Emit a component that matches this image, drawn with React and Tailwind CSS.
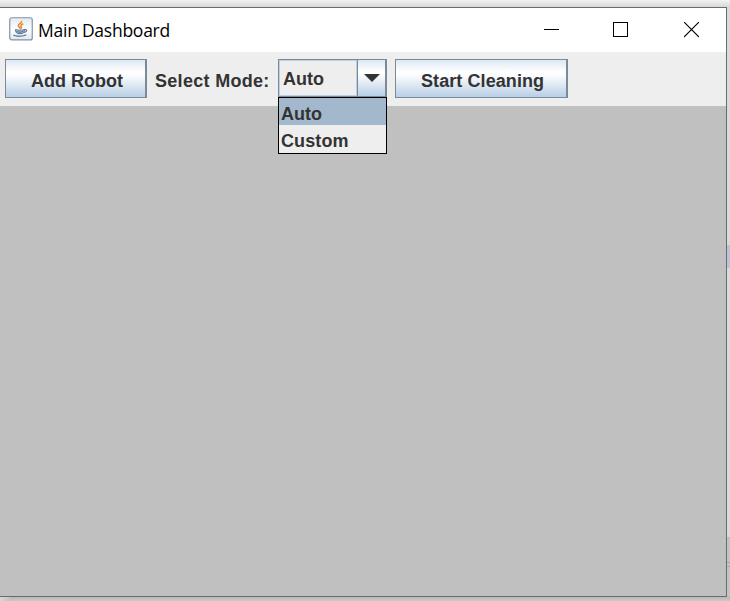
import React from "react";

const label = "whitespace-nowrap text-[18px] leading-[20px] font-bold text-[#333333]";
const metal =
  "bg-[linear-gradient(to_bottom,#dde8f3_0%,#ffffff_32%,#fbfcfe_42%,#b8cfe5_100%)]";

function JavaIcon() {
  return (
    <svg width="24" height="24" viewBox="0 0 24 24" fill="none">
      <defs>
        <linearGradient id="tile" x1="0" y1="0" x2="0" y2="1">
          <stop offset="0" stopColor="#e4e9ee" />
          <stop offset="0.5" stopColor="#ffffff" />
          <stop offset="1" stopColor="#e2e7ed" />
        </linearGradient>
      </defs>
      <rect x="0.75" y="0.75" width="22.5" height="22.2" rx="2" fill="url(#tile)" stroke="#8194a8" strokeWidth="1.2" />
      <path d="M12.600 3.800c1 2-3.800 3-3.300 5 .2 1.200 1.700 1.500 1.900 2.900M14.300 6.800c-2.200.9-2.900 1.800-2.200 2.800.6.900.4 1.500-.5 2.100" stroke="#e8852f" strokeWidth="1.500" />
      <path d="M6.500 12.500c1.500.9 7.300.9 9 0-.1 2.200-1 3.700-2.100 4.100H8.600c-1.300-.5-2-2-2.100-4.100z" fill="#bccbd9" stroke="#4f7090" strokeWidth="1" />
      <path d="M7.500 14.600c1.800.6 5 .6 6.900 0M4.500 17.800c1.500 1.700 10.500 1.800 12.800-.2M15.500 12.700c3.200-.8 2.800 2.200-.8 2.800" stroke="#4f7090" strokeWidth="1.100" />
    </svg>
  );
}

function Button({ children, className }) {
  return (
    <button className={`flex h-[39px] shrink-0 border border-r-2 border-[#7a8a99] pl-[25px] pt-[11px] ${metal} ${className}`}>
      <span className={label}>{children}</span>
    </button>
  );
}

function TitleBar() {
  return (
    <header className="flex h-11 items-start bg-white">
      <div className="ml-[9px] mt-[9px]">
        <JavaIcon />
      </div>
      <h1 className="ml-[5px] mt-[10px] grow whitespace-nowrap font-['Open_Sans',sans-serif] text-[17.5px] leading-[24px] tracking-[-0.25px] text-black">
        Main Dashboard
      </h1>
      <div className="mr-[27px] mt-[14px] flex gap-[54px]">
        <svg width="15" height="16" viewBox="0 0 15 16" shapeRendering="crispEdges">
          <path d="M0 7.5h15" stroke="#000" />
        </svg>
        <svg width="15" height="16" viewBox="0 0 15 16" fill="none" shapeRendering="crispEdges">
          <path d="M.5.5h14v14H.5z" stroke="#000" />
        </svg>
        <svg className="ml-[2px]" width="15" height="16" viewBox="0 0 15 16">
          <path d="M0 0l15 15M15 0L0 15" stroke="#000" strokeWidth="1.1" />
        </svg>
      </div>
    </header>
  );
}

function ModeSelect() {
  return (
    <div className="relative ml-[9px] h-[38px] w-[109px] shrink-0">
      <div className="flex h-full border border-[#7a8a99] bg-[#eeeeee]">
        <div className="w-[78px] border border-[#b8cfe5] pl-[3px] pt-[8px]">
          <div className={label}>Auto</div>
        </div>
        <div className={`flex grow justify-center border-l border-r border-[#7a8a99] pt-[14px] ${metal}`}>
          <svg width="16" height="8" viewBox="0 0 16 8">
            <path d="M0 0h16L8 8z" fill="#333" />
          </svg>
        </div>
      </div>
      <div className="absolute left-0 top-[38px] h-[57px] w-[109px] border border-black bg-[#eeeeee]">
        <div className={`h-[27px] bg-[#a3b8cc] pl-[2px] pt-[6px] ${label}`}>Auto</div>
        <div className={`h-[27px] pl-[2px] pt-[6px] tracking-[0.1px] ${label}`}>Custom</div>
      </div>
    </div>
  );
}

export default function App() {
  return (
    <div className="flex h-[601px] w-[730px] flex-col overflow-hidden bg-[#c3c3c3] font-['Liberation_Sans',Arial,sans-serif]">
      <div className="h-[7px] shrink-0 bg-linear-to-b from-[#f3f3f3] to-[#d8d8d8]" />
      <div className="flex h-[590px] shrink-0">
        <main className="flex w-[727px] flex-col border-b border-r border-t border-[#6b6b6b] bg-[#c0c0c0]">
          <TitleBar />
          <div className="flex h-[54px] shrink-0 items-start bg-[#eeeeee] pl-[5px] pt-[7px]">
            <Button className="w-[142px]">Add Robot</Button>
            <div className={`ml-2 mt-[12px] w-[114px] tracking-[0.3px] ${label}`}>Select Mode:</div>
            <ModeSelect />
            <Button className="ml-2 w-[173px] tracking-[0.08px]">Start Cleaning</Button>
          </div>
        </main>
        <aside className="flex w-[3px] flex-col bg-[#dadada]">
          <div className="mt-[238px] h-[23px] bg-[#b9c5d4]" />
          <div className="mt-[269px] grow border-t border-[#bdbdbd] bg-[#c4c4c4]">
            <div className="mt-[24px] h-[5px] border-y border-[#aaaaaa]" />
          </div>
        </aside>
      </div>
      <div className="flex grow">
        <div className="w-[10px] bg-linear-to-r from-[#d8d8d8] to-[#c3c3c3]" />
        <div className="grow bg-linear-to-b from-[#b8b8b8] to-[#c9c9c9]" />
      </div>
    </div>
  );
}
